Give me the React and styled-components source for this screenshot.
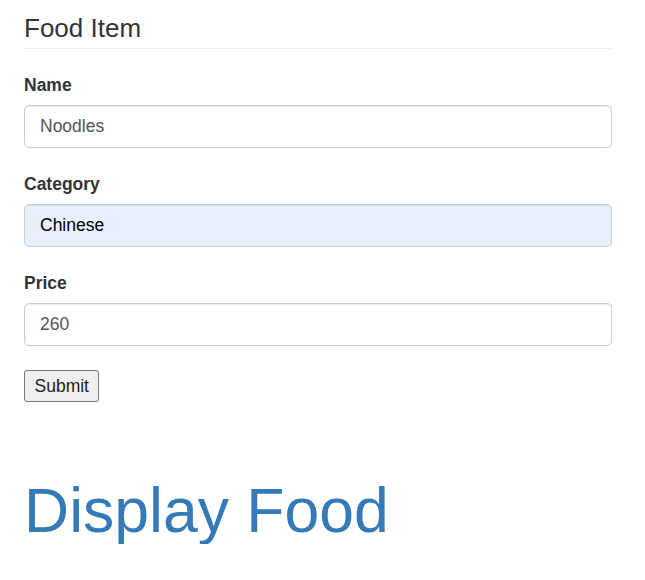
import React, { useState } from 'react'
import styled, { createGlobalStyle } from 'styled-components'

const GlobalStyle = createGlobalStyle`
  body {
    margin: 0;
    background: #fff;
    font-family: 'Liberation Sans', Arial, Helvetica, sans-serif;
    color: #333;
  }
`

const Page = styled.div`
  width: 588px;
  padding: 14px 0 0 24px;
`

const Header = styled.h3`
  margin: 0 0 24px;
  padding-bottom: 5px;
  border-bottom: 1px solid #eee;
  font-size: 26px;
  font-weight: 400;
  line-height: 1.1;
  color: #333;
`

const Form = styled.form`
  display: flex;
  flex-direction: column;
  align-items: flex-start;
  gap: 24px;
`

const Group = styled.div`
  width: 100%;
`

const Label = styled.label`
  display: block;
  margin-bottom: 7px;
  font-size: 17.5px;
  line-height: 25px;
  font-weight: 700;
  color: #333;
`

const Input = styled.input`
  box-sizing: border-box;
  display: block;
  width: 100%;
  height: 43px;
  padding: 0 15px;
  border: 1px solid ${(p) => (p.$filled ? '#c9ced6' : '#ccc')};
  border-radius: 5px;
  background: ${(p) => (p.$filled ? '#e8f0fe' : '#fff')};
  color: ${(p) => (p.$filled ? '#000' : '#555')};
  font-family: inherit;
  font-size: 17.5px;
  box-shadow: inset 0 1px 1px rgba(0, 0, 0, 0.075);
  outline: none;
`

const Submit = styled.button`
  box-sizing: border-box;
  height: 32px;
  padding: 0 9.5px;
  border: 1px solid #767676;
  border-radius: 3px;
  background: #efefef;
  color: #222;
  font-family: inherit;
  font-size: 17.5px;
  line-height: 20px;
`

const Title = styled.h1`
  margin: 74px 0 0;
  font-size: 62.5px;
  font-weight: 400;
  line-height: 1.1;
  color: #337ab7;
`

const App = () => {
  const [inputs, setInputs] = useState({
    name: 'Noodles',
    category: 'Chinese',
    price: '260',
  })

  const handleChange = (e) => {
    const { name, value } = e.target
    setInputs((inputs) => ({ ...inputs, [name]: value }))
  }

  return (
    <Page>
      <GlobalStyle />
      <Header>Food Item</Header>
      <Form onSubmit={(e) => e.preventDefault()}>
        <Group>
          <Label htmlFor="name">Name</Label>
          <Input id="name" name="name" value={inputs.name} onChange={handleChange} />
        </Group>
        <Group>
          <Label htmlFor="category">Category</Label>
          <Input
            id="category"
            name="category"
            $filled
            value={inputs.category}
            onChange={handleChange}
          />
        </Group>
        <Group>
          <Label htmlFor="price">Price</Label>
          <Input id="price" name="price" value={inputs.price} onChange={handleChange} />
        </Group>
        <Submit type="submit">Submit</Submit>
      </Form>
      <Title>Display Food</Title>
    </Page>
  )
}

export default App
